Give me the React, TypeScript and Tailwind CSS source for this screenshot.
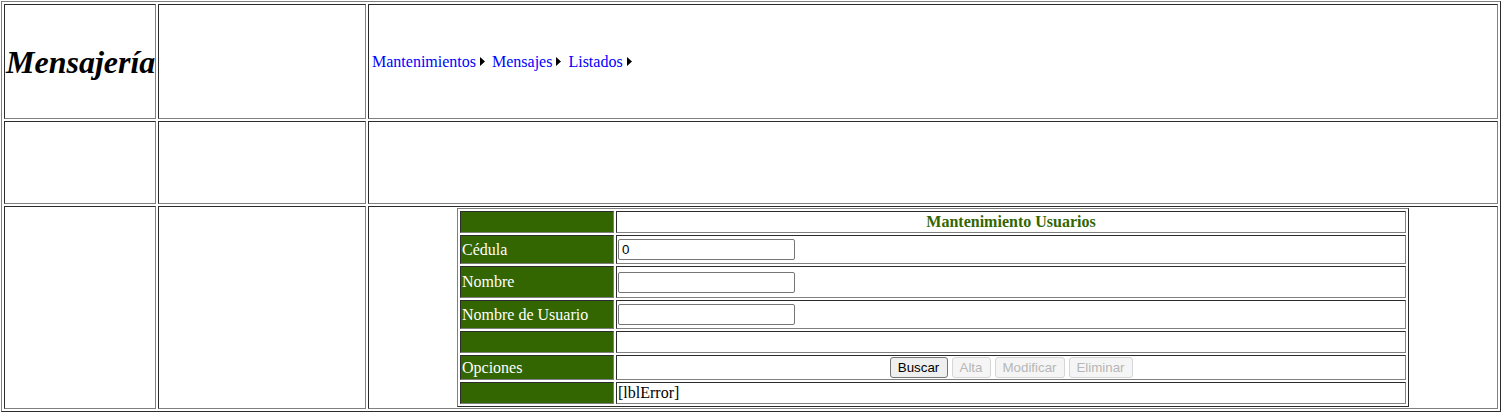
import React from "react";

const inset =
  "border border-t-[#2c2c2c] border-l-[#2c2c2c] border-r-[#808080] border-b-[#808080]";
const outset =
  "border border-t-[#808080] border-l-[#808080] border-r-[#2c2c2c] border-b-[#2c2c2c]";

function Arrow() {
  return (
    <svg width="5" height="9" viewBox="0 0 5 9" className="ml-[4px] mr-[7px] shrink-0">
      <polygon points="0,0 5,4.5 0,9" fill="#000" />
    </svg>
  );
}

function Label({ children, h }: { children?: React.ReactNode; h: string }) {
  return (
    <div className={`${inset} ${h} bg-[#336600] text-white px-px flex items-center leading-none`}>
      {children}
    </div>
  );
}

function Value({ children, h, center }: { children?: React.ReactNode; h: string; center?: boolean }) {
  return (
    <div className={`${inset} ${h} bg-white px-px flex items-center ${center ? "justify-center" : ""}`}>
      {children}
    </div>
  );
}

function TextInput({ value }: { value?: string }) {
  return (
    <input
      defaultValue={value}
      className="w-[177px] h-[21px] border border-[#767676] rounded-[2px] px-[3px] bg-white text-[13.33px] text-black font-['Liberation_Sans',Arial,sans-serif] outline-none"
    />
  );
}

export default function App() {
  return (
    <div className="pl-[1px] pt-[1px] bg-white min-h-[417px] font-['Liberation_Serif','Times_New_Roman',serif] text-[16px] text-black">
      <div className={`${outset} w-[1500px] h-[411px] p-[2px] flex flex-col gap-[2px]`}>
        {/* Row 1 */}
        <div className="flex gap-[2px] h-[115px]">
          <div className={`${inset} w-[152px] flex-none flex items-center px-px`}>
            <h1 className="text-[32px] font-bold italic leading-none">Mensajería</h1>
          </div>
          <div className={`${inset} w-[208px] flex-none`} />
          <div className={`${inset} w-[1130px] flex-none flex items-center pl-[3px]`}>
            <a className="text-[#0000ff] leading-none">Mantenimientos</a>
            <Arrow />
            <a className="text-[#0000ff] leading-none">Mensajes</a>
            <Arrow />
            <a className="text-[#0000ff] leading-none">Listados</a>
            <Arrow />
          </div>
        </div>
        {/* Row 2 */}
        <div className="flex gap-[2px] h-[83px]">
          <div className={`${inset} w-[152px] flex-none`} />
          <div className={`${inset} w-[208px] flex-none`} />
          <div className={`${inset} w-[1130px] flex-none`} />
        </div>
        {/* Row 3 */}
        <div className="flex gap-[2px] h-[203px]">
          <div className={`${inset} w-[152px] flex-none`} />
          <div className={`${inset} w-[208px] flex-none`} />
          <div className={`${inset} w-[1130px] flex-none p-px flex justify-center`}>
            <div className={`${outset} w-[952px] h-[199px] p-[2px] grid grid-cols-[154px_790px] gap-[2px] content-start`}>
              <Label h="h-[22px]" />
              <Value h="h-[22px]" center>
                <span className="text-[#336600] font-bold leading-none">Mantenimiento Usuarios</span>
              </Value>

              <Label h="h-[29px]">Cédula</Label>
              <Value h="h-[29px]">
                <TextInput value="0" />
              </Value>

              <Label h="h-[32px]">Nombre</Label>
              <Value h="h-[32px]">
                <TextInput />
              </Value>

              <Label h="h-[29px]">Nombre de Usuario</Label>
              <Value h="h-[29px]">
                <TextInput />
              </Value>

              <Label h="h-[22px]" />
              <Value h="h-[22px]" />

              <Label h="h-[25px]">Opciones</Label>
              <Value h="h-[25px]" center>
                <div className="flex gap-[4px] font-['Liberation_Sans',Arial,sans-serif] text-[13.33px]">
                  <button className="w-[58px] h-[21px] border border-[#767676] rounded-[3px] bg-[#efefef] text-black leading-none">
                    Buscar
                  </button>
                  <button disabled className="w-[39px] h-[21px] border border-[#d6d6d6] rounded-[3px] bg-[#f5f5f5] text-[#b7b7b7] leading-none">
                    Alta
                  </button>
                  <button disabled className="w-[70px] h-[21px] border border-[#d6d6d6] rounded-[3px] bg-[#f5f5f5] text-[#b7b7b7] leading-none">
                    Modificar
                  </button>
                  <button disabled className="w-[64px] h-[21px] border border-[#d6d6d6] rounded-[3px] bg-[#f5f5f5] text-[#b7b7b7] leading-none">
                    Eliminar
                  </button>
                </div>
              </Value>

              <Label h="h-[22px]" />
              <Value h="h-[22px]">
                <span className="leading-none">[lblError]</span>
              </Value>
            </div>
          </div>
        </div>
      </div>
    </div>
  );
}
